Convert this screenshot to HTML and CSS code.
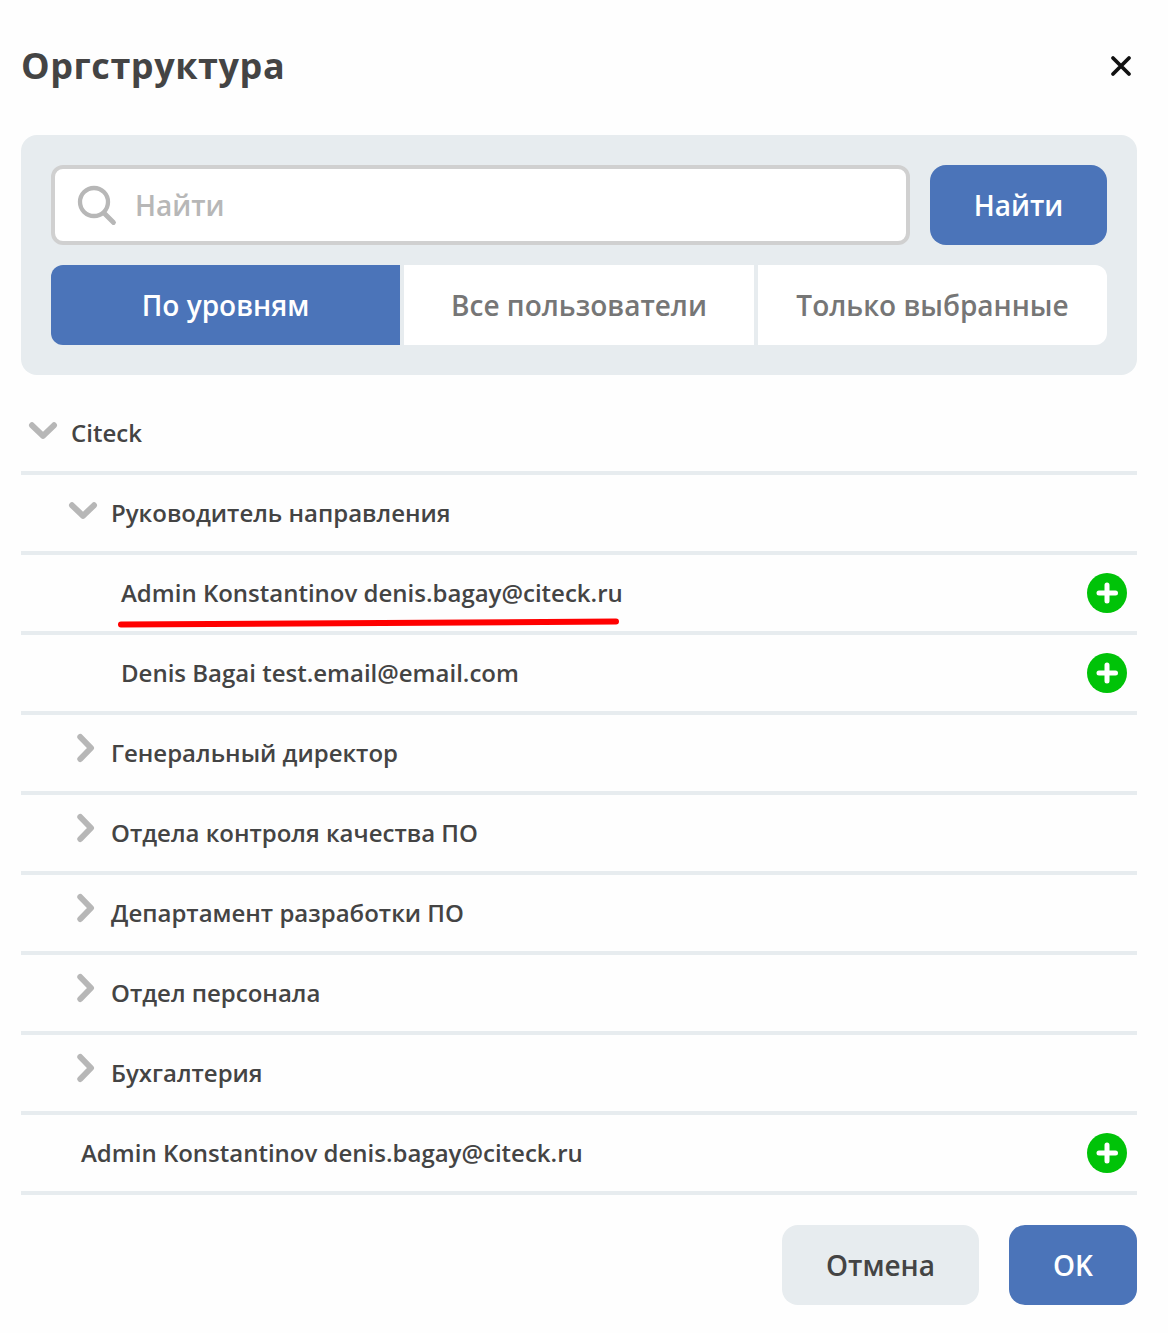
FILE: index.html
```html
<!DOCTYPE html>
<html lang="ru">
<head>
<meta charset="utf-8">
<title>Оргструктура</title>
<link rel="stylesheet" href="styles.css">
</head>
<body>
<svg class="sprite" aria-hidden="true">
  <symbol id="down" viewBox="0 0 30 20"><path d="M4 4.300 15 14.800 26 4.300"/></symbol>
  <symbol id="right" viewBox="0 0 20 30"><path d="M4.300 4 15 15 4.300 26"/></symbol>
  <symbol id="plus" viewBox="0 0 40 40"><circle cx="20" cy="20" r="20"/><path d="M12 20H28.500M20 12V28"/></symbol>
</svg>
<main class="modal">
  <header class="header">
    <h1 class="title">Оргструктура</h1>
    <button class="close" aria-label="Закрыть"><svg viewBox="0 0 20 20"><path d="M2 2 18 18M18 2 2 18"/></svg></button>
  </header>
  <section class="panel">
    <div class="search">
      <label class="field">
        <svg class="lens" viewBox="0 0 40 42"><circle cx="17" cy="18" r="14"/><path d="M27 29 36.500 38.500"/></svg>
        <input class="input" type="text" placeholder="Найти">
      </label>
      <button class="btn btn-primary btn-find">Найти</button>
    </div>
    <nav class="tabs">
      <button class="tab tab-active">По уровням</button>
      <button class="tab">Все пользователи</button>
      <button class="tab">Только выбранные</button>
    </nav>
  </section>
  <ul class="tree">
    <li class="row level-0"><svg class="arrow"><use href="#down"/></svg><span class="name">Citeck</span></li>
    <li class="row level-1"><svg class="arrow"><use href="#down"/></svg><span class="name">Руководитель направления</span></li>
    <li class="row user-2"><span class="name marked">Admin Konstantinov denis.bagay@citeck.ru<svg class="mark" viewBox="0 0 504 12"><path d="M4 8.500C120 7 300 6.500 499 5.500"/></svg></span><svg class="add"><use href="#plus"/></svg></li>
    <li class="row user-2"><span class="name">Denis Bagai test.email@email.com</span><svg class="add"><use href="#plus"/></svg></li>
    <li class="row level-1"><svg class="arrow closed"><use href="#right"/></svg><span class="name">Генеральный директор</span></li>
    <li class="row level-1"><svg class="arrow closed"><use href="#right"/></svg><span class="name">Отдела контроля качества ПО</span></li>
    <li class="row level-1"><svg class="arrow closed"><use href="#right"/></svg><span class="name">Департамент разработки ПО</span></li>
    <li class="row level-1"><svg class="arrow closed"><use href="#right"/></svg><span class="name">Отдел персонала</span></li>
    <li class="row level-1"><svg class="arrow closed"><use href="#right"/></svg><span class="name">Бухгалтерия</span></li>
    <li class="row user-1"><span class="name">Admin Konstantinov denis.bagay@citeck.ru</span><svg class="add"><use href="#plus"/></svg></li>
  </ul>
  <footer class="footer">
    <button class="btn btn-cancel">Отмена</button>
    <button class="btn btn-primary btn-ok">OK</button>
  </footer>
</main>
</body>
</html>
```
FILE: styles.css
```css
* { box-sizing: border-box; }
body { margin: 0; background: #fefefe; color: #444; font-family: "Open Sans", "Noto Sans", sans-serif; }
button { border: 0; padding: 0; font: inherit; color: inherit; background: none; }
svg { display: block; flex: none; overflow: visible; }
path { fill: none; stroke-linecap: round; stroke-linejoin: round; }
.sprite { position: absolute; width: 0; height: 0; }
.modal { width: 1168px; height: 1333px; padding: 0 31px 0 21px; overflow: hidden; }
.header { display: flex; align-items: center; justify-content: space-between; height: 135px; padding: 0 6px 3px 0; }
.title { margin: 0; font-size: 36px; font-weight: 700; line-height: 50px; letter-spacing: 0.56px; }
.close svg { width: 20px; height: 20px; }
.close path { stroke: #111; stroke-width: 3.800; }
.panel { display: flex; flex-direction: column; gap: 20px; height: 240px; padding: 30px; border-radius: 16px; background: #e7ecef; }
.search { display: flex; gap: 20px; }
.field { display: flex; flex: 1; align-items: center; gap: 18px; height: 80px; padding: 0 22px; border: 4px solid #d0d0d0; border-radius: 12px; background: #fff; }
.lens { width: 40px; height: 42px; }
.lens circle { fill: none; stroke: #b7b7b7; stroke-width: 4.300; }
.lens path { stroke: #b7b7b7; stroke-width: 4.800; }
.input { flex: 1; min-width: 0; padding: 0; border: 0; background: none; font: 600 28px/38px "Open Sans", sans-serif; }
.input::placeholder { color: #b7b7b7; opacity: 1; }
.btn { height: 80px; border-radius: 16px; font-size: 28px; line-height: 38px; font-weight: 600; }
.btn-primary { background: #4b74b9; color: #fff; }
.btn-find { width: 177px; }
.tabs { display: grid; grid-template-columns: 349px 350px 349px; gap: 4px; height: 80px; border-radius: 12px; overflow: hidden; }
.tab { background: #fff; color: #767676; font-size: 28px; line-height: 38px; font-weight: 600; }
.tab-active { background: #4b74b9; color: #fff; }
.tree { margin: 20px 0 0; padding: 0; list-style: none; }
.row { display: flex; align-items: center; height: 80px; border-bottom: 4px solid #e7ecef; font-size: 24px; font-weight: 600; }
.level-0 { padding-left: 7px; }
.level-1 { padding-left: 47px; }
.user-1 { padding: 0 10px 0 60px; }
.user-2 { padding: 0 10px 0 100px; }
.arrow { width: 30px; height: 20px; margin: 0 13px 5px 0; stroke: #b7b7b7; stroke-width: 6; }
.closed { width: 20px; height: 30px; margin: 0 15px 10px 8px; }
.name { padding-bottom: 2px; white-space: nowrap; }
.marked { position: relative; }
.mark { position: absolute; left: -4px; bottom: -17px; width: 504px; height: 12px; }
.mark path { stroke: #f00; stroke-width: 6; }
.add { width: 40px; height: 40px; margin-left: auto; fill: #00c308; stroke: #fff; stroke-width: 5; }
#plus circle { stroke: none; }
.footer { display: flex; justify-content: flex-end; gap: 30px; margin-top: 30px; }
.btn-cancel { width: 197px; background: #e7ecef; }
.btn-ok { width: 128px; }
```
